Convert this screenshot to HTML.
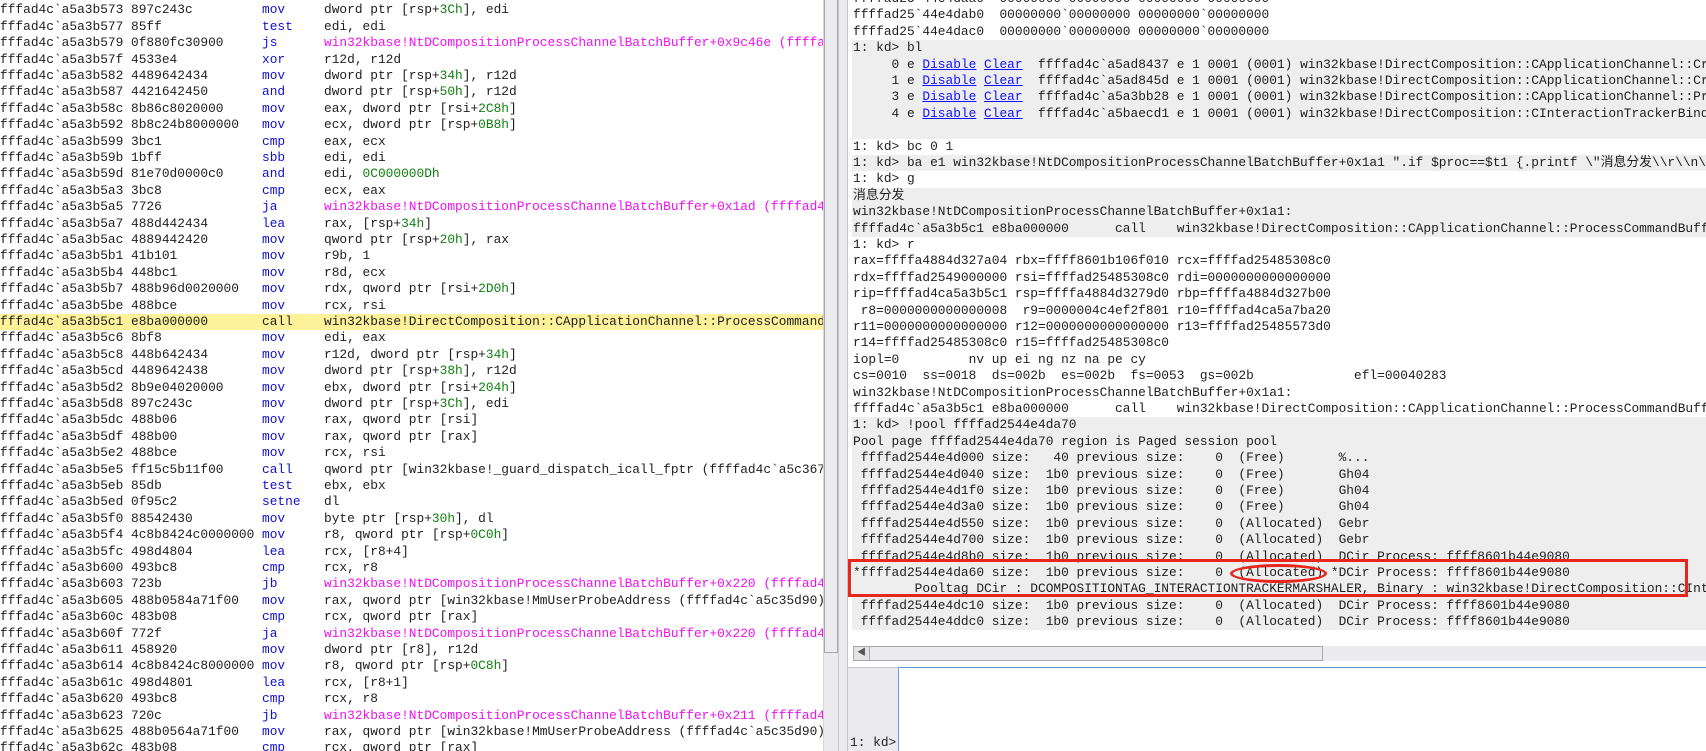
<!DOCTYPE html>
<html><head><meta charset="utf-8"><style>
*{margin:0;padding:0;box-sizing:border-box}
html,body{width:1706px;height:751px;overflow:hidden;background:#fff}
body{position:relative;font-family:"Liberation Mono","Noto Sans CJK SC",monospace;font-size:12.85px;color:#1e1e1e}
.r{position:absolute;left:0;height:16.4px;line-height:16.4px;white-space:pre}
#left{position:absolute;left:0;top:0;width:823px;height:751px;overflow:hidden}
#left .r{width:823px}
.m{position:absolute;left:262px;color:#1010d0}
.o{position:absolute;left:324px}
.b{position:absolute;left:131px}
.a{position:absolute;left:0}
.p{color:#f010f0}
.g{color:#108010}
.hl{background:#fdf29a}
#vs{position:absolute;left:823px;top:0;width:15px;height:751px;background:#ebebef;border-left:1px solid #d8d8d8}
#vthumb{position:absolute;left:824px;top:0;width:14px;height:653px;background:#ececf0;border:1px solid #a8a8a8;border-top:none}
#div{position:absolute;left:838px;top:0;width:10px;height:751px;background:#ebebef;border-left:1px solid #c8c8c8;border-right:1px solid #c8c8c8}
#right{position:absolute;left:848px;top:0;width:858px;height:640px;overflow:hidden}
#right .r{left:5px;width:900px}
.gb{position:absolute;left:4px;width:860px;background:#eeeeee}
.lk{color:#1010ff;text-decoration:underline}
#hs{position:absolute;left:853px;top:646px;width:853px;height:15px;background:#ececf0}
#hthumb{position:absolute;left:853px;top:646px;width:470px;height:15px;border:1px solid #a8a8a8;background:#ececf0}
#harr{position:absolute;left:853px;top:646px;width:17px;height:15px;border:1px solid #a8a8a8;background:#e4e4e8;font-size:9px;line-height:13px;text-align:center;color:#555}
#inl{position:absolute;left:848px;top:667px;width:50px;height:84px;background:#ebebef;border-top:1px solid #c8c8c8}
#inp{position:absolute;left:898px;top:667px;width:808px;height:84px;background:#fff;border-left:1px solid #6a9ad6;border-top:1px solid #6a9ad6}
#redbox{position:absolute;left:848px;top:559px;width:840px;height:38px;border:3px solid #e8261c}
#ell{position:absolute;left:1230px;top:564px;width:97px;height:19px;border:3px solid #e8261c;border-radius:50%}
</style></head><body>
<div id="left">
<div class="r" style="top:2.4px"><span class="a">fffad4c`a5a3b573</span><span class="b">897c243c</span><span class="m">mov</span><span class="o">dword ptr [rsp+<span class="g">3Ch</span>], edi</span></div>
<div class="r" style="top:18.8px"><span class="a">fffad4c`a5a3b577</span><span class="b">85ff</span><span class="m">test</span><span class="o">edi, edi</span></div>
<div class="r" style="top:35.2px"><span class="a">fffad4c`a5a3b579</span><span class="b">0f880fc30900</span><span class="m">js</span><span class="o p">win32kbase!NtDCompositionProcessChannelBatchBuffer+0x9c46e (ffffad4c`a5ad79e8)</span></div>
<div class="r" style="top:51.6px"><span class="a">fffad4c`a5a3b57f</span><span class="b">4533e4</span><span class="m">xor</span><span class="o">r12d, r12d</span></div>
<div class="r" style="top:68px"><span class="a">fffad4c`a5a3b582</span><span class="b">4489642434</span><span class="m">mov</span><span class="o">dword ptr [rsp+<span class="g">34h</span>], r12d</span></div>
<div class="r" style="top:84.4px"><span class="a">fffad4c`a5a3b587</span><span class="b">4421642450</span><span class="m">and</span><span class="o">dword ptr [rsp+<span class="g">50h</span>], r12d</span></div>
<div class="r" style="top:100.8px"><span class="a">fffad4c`a5a3b58c</span><span class="b">8b86c8020000</span><span class="m">mov</span><span class="o">eax, dword ptr [rsi+<span class="g">2C8h</span>]</span></div>
<div class="r" style="top:117.2px"><span class="a">fffad4c`a5a3b592</span><span class="b">8b8c24b8000000</span><span class="m">mov</span><span class="o">ecx, dword ptr [rsp+<span class="g">0B8h</span>]</span></div>
<div class="r" style="top:133.6px"><span class="a">fffad4c`a5a3b599</span><span class="b">3bc1</span><span class="m">cmp</span><span class="o">eax, ecx</span></div>
<div class="r" style="top:150px"><span class="a">fffad4c`a5a3b59b</span><span class="b">1bff</span><span class="m">sbb</span><span class="o">edi, edi</span></div>
<div class="r" style="top:166.4px"><span class="a">fffad4c`a5a3b59d</span><span class="b">81e70d0000c0</span><span class="m">and</span><span class="o">edi, <span class="g">0C000000Dh</span></span></div>
<div class="r" style="top:182.8px"><span class="a">fffad4c`a5a3b5a3</span><span class="b">3bc8</span><span class="m">cmp</span><span class="o">ecx, eax</span></div>
<div class="r" style="top:199.2px"><span class="a">fffad4c`a5a3b5a5</span><span class="b">7726</span><span class="m">ja</span><span class="o p">win32kbase!NtDCompositionProcessChannelBatchBuffer+0x1ad (ffffad4c`a5a3b5cd)</span></div>
<div class="r" style="top:215.6px"><span class="a">fffad4c`a5a3b5a7</span><span class="b">488d442434</span><span class="m">lea</span><span class="o">rax, [rsp+<span class="g">34h</span>]</span></div>
<div class="r" style="top:232px"><span class="a">fffad4c`a5a3b5ac</span><span class="b">4889442420</span><span class="m">mov</span><span class="o">qword ptr [rsp+<span class="g">20h</span>], rax</span></div>
<div class="r" style="top:248.4px"><span class="a">fffad4c`a5a3b5b1</span><span class="b">41b101</span><span class="m">mov</span><span class="o">r9b, 1</span></div>
<div class="r" style="top:264.8px"><span class="a">fffad4c`a5a3b5b4</span><span class="b">448bc1</span><span class="m">mov</span><span class="o">r8d, ecx</span></div>
<div class="r" style="top:281.2px"><span class="a">fffad4c`a5a3b5b7</span><span class="b">488b96d0020000</span><span class="m">mov</span><span class="o">rdx, qword ptr [rsi+<span class="g">2D0h</span>]</span></div>
<div class="r" style="top:297.6px"><span class="a">fffad4c`a5a3b5be</span><span class="b">488bce</span><span class="m">mov</span><span class="o">rcx, rsi</span></div>
<div class="r hl" style="top:314px"><span class="a">fffad4c`a5a3b5c1</span><span class="b">e8ba000000</span><span class="m" style="color:#1e1e1e">call</span><span class="o">win32kbase!DirectComposition::CApplicationChannel::ProcessCommandBufferIterator</span></div>
<div class="r" style="top:330.4px"><span class="a">fffad4c`a5a3b5c6</span><span class="b">8bf8</span><span class="m">mov</span><span class="o">edi, eax</span></div>
<div class="r" style="top:346.8px"><span class="a">fffad4c`a5a3b5c8</span><span class="b">448b642434</span><span class="m">mov</span><span class="o">r12d, dword ptr [rsp+<span class="g">34h</span>]</span></div>
<div class="r" style="top:363.2px"><span class="a">fffad4c`a5a3b5cd</span><span class="b">4489642438</span><span class="m">mov</span><span class="o">dword ptr [rsp+<span class="g">38h</span>], r12d</span></div>
<div class="r" style="top:379.6px"><span class="a">fffad4c`a5a3b5d2</span><span class="b">8b9e04020000</span><span class="m">mov</span><span class="o">ebx, dword ptr [rsi+<span class="g">204h</span>]</span></div>
<div class="r" style="top:396px"><span class="a">fffad4c`a5a3b5d8</span><span class="b">897c243c</span><span class="m">mov</span><span class="o">dword ptr [rsp+<span class="g">3Ch</span>], edi</span></div>
<div class="r" style="top:412.4px"><span class="a">fffad4c`a5a3b5dc</span><span class="b">488b06</span><span class="m">mov</span><span class="o">rax, qword ptr [rsi]</span></div>
<div class="r" style="top:428.8px"><span class="a">fffad4c`a5a3b5df</span><span class="b">488b00</span><span class="m">mov</span><span class="o">rax, qword ptr [rax]</span></div>
<div class="r" style="top:445.2px"><span class="a">fffad4c`a5a3b5e2</span><span class="b">488bce</span><span class="m">mov</span><span class="o">rcx, rsi</span></div>
<div class="r" style="top:461.6px"><span class="a">fffad4c`a5a3b5e5</span><span class="b">ff15c5b11f00</span><span class="m">call</span><span class="o">qword ptr [win32kbase!_guard_dispatch_icall_fptr (ffffad4c`a5c367b0)]</span></div>
<div class="r" style="top:478px"><span class="a">fffad4c`a5a3b5eb</span><span class="b">85db</span><span class="m">test</span><span class="o">ebx, ebx</span></div>
<div class="r" style="top:494.4px"><span class="a">fffad4c`a5a3b5ed</span><span class="b">0f95c2</span><span class="m">setne</span><span class="o">dl</span></div>
<div class="r" style="top:510.8px"><span class="a">fffad4c`a5a3b5f0</span><span class="b">88542430</span><span class="m">mov</span><span class="o">byte ptr [rsp+<span class="g">30h</span>], dl</span></div>
<div class="r" style="top:527.2px"><span class="a">fffad4c`a5a3b5f4</span><span class="b">4c8b8424c0000000</span><span class="m">mov</span><span class="o">r8, qword ptr [rsp+<span class="g">0C0h</span>]</span></div>
<div class="r" style="top:543.6px"><span class="a">fffad4c`a5a3b5fc</span><span class="b">498d4804</span><span class="m">lea</span><span class="o">rcx, [r8+4]</span></div>
<div class="r" style="top:560px"><span class="a">fffad4c`a5a3b600</span><span class="b">493bc8</span><span class="m">cmp</span><span class="o">rcx, r8</span></div>
<div class="r" style="top:576.4px"><span class="a">fffad4c`a5a3b603</span><span class="b">723b</span><span class="m">jb</span><span class="o p">win32kbase!NtDCompositionProcessChannelBatchBuffer+0x220 (ffffad4c`a5a3b640)</span></div>
<div class="r" style="top:592.8px"><span class="a">fffad4c`a5a3b605</span><span class="b">488b0584a71f00</span><span class="m">mov</span><span class="o">rax, qword ptr [win32kbase!MmUserProbeAddress (ffffad4c`a5c35d90)]</span></div>
<div class="r" style="top:609.2px"><span class="a">fffad4c`a5a3b60c</span><span class="b">483b08</span><span class="m">cmp</span><span class="o">rcx, qword ptr [rax]</span></div>
<div class="r" style="top:625.6px"><span class="a">fffad4c`a5a3b60f</span><span class="b">772f</span><span class="m">ja</span><span class="o p">win32kbase!NtDCompositionProcessChannelBatchBuffer+0x220 (ffffad4c`a5a3b640)</span></div>
<div class="r" style="top:642px"><span class="a">fffad4c`a5a3b611</span><span class="b">458920</span><span class="m">mov</span><span class="o">dword ptr [r8], r12d</span></div>
<div class="r" style="top:658.4px"><span class="a">fffad4c`a5a3b614</span><span class="b">4c8b8424c8000000</span><span class="m">mov</span><span class="o">r8, qword ptr [rsp+<span class="g">0C8h</span>]</span></div>
<div class="r" style="top:674.8px"><span class="a">fffad4c`a5a3b61c</span><span class="b">498d4801</span><span class="m">lea</span><span class="o">rcx, [r8+1]</span></div>
<div class="r" style="top:691.2px"><span class="a">fffad4c`a5a3b620</span><span class="b">493bc8</span><span class="m">cmp</span><span class="o">rcx, r8</span></div>
<div class="r" style="top:707.6px"><span class="a">fffad4c`a5a3b623</span><span class="b">720c</span><span class="m">jb</span><span class="o p">win32kbase!NtDCompositionProcessChannelBatchBuffer+0x211 (ffffad4c`a5a3b631)</span></div>
<div class="r" style="top:724px"><span class="a">fffad4c`a5a3b625</span><span class="b">488b0564a71f00</span><span class="m">mov</span><span class="o">rax, qword ptr [win32kbase!MmUserProbeAddress (ffffad4c`a5c35d90)]</span></div>
<div class="r" style="top:740.4px"><span class="a">fffad4c`a5a3b62c</span><span class="b">483b08</span><span class="m">cmp</span><span class="o">rcx, qword ptr [rax]</span></div>
</div>
<div id="vs"></div><div id="vthumb"></div>
<div id="div"></div>

<div id="right">
<div class="gb" style="top:40.2px;height:98.4px"></div>
<div class="gb" style="top:155px;height:16.4px"></div>
<div class="gb" style="top:187.8px;height:49.2px"></div>
<div class="gb" style="top:417.4px;height:213px"></div>
<div class="r" style="top:-9px">ffffad25`44e4daa0  00000000`00000000 00000000`00000000</div>
<div class="r" style="top:7.4px">ffffad25`44e4dab0  00000000`00000000 00000000`00000000</div>
<div class="r" style="top:23.8px">ffffad25`44e4dac0  00000000`00000000 00000000`00000000</div>
<div class="r" style="top:40.2px">1: kd&gt; bl</div>
<div class="r" style="top:56.6px">     0 e <span class="lk">Disable</span> <span class="lk">Clear</span>  ffffad4c`a5ad8437 e 1 0001 (0001) win32kbase!DirectComposition::CApplicationChannel::CreateResource</div>
<div class="r" style="top:73px">     1 e <span class="lk">Disable</span> <span class="lk">Clear</span>  ffffad4c`a5ad845d e 1 0001 (0001) win32kbase!DirectComposition::CApplicationChannel::CreateResource</div>
<div class="r" style="top:89.4px">     3 e <span class="lk">Disable</span> <span class="lk">Clear</span>  ffffad4c`a5a3bb28 e 1 0001 (0001) win32kbase!DirectComposition::CApplicationChannel::ProcessCommand</div>
<div class="r" style="top:105.8px">     4 e <span class="lk">Disable</span> <span class="lk">Clear</span>  ffffad4c`a5baecd1 e 1 0001 (0001) win32kbase!DirectComposition::CInteractionTrackerBindingManager</div>
<div class="r" style="top:138.6px">1: kd&gt; bc 0 1</div>
<div class="r" style="top:155px">1: kd&gt; ba e1 win32kbase!NtDCompositionProcessChannelBatchBuffer+0x1a1 ".if $proc==$t1 {.printf \"消息分发\\r\\n\";}"</div>
<div class="r" style="top:171.4px">1: kd&gt; g</div>
<div class="r" style="top:187.8px">消息分发</div>
<div class="r" style="top:204.2px">win32kbase!NtDCompositionProcessChannelBatchBuffer+0x1a1:</div>
<div class="r" style="top:220.6px">ffffad4c`a5a3b5c1 e8ba000000      call    win32kbase!DirectComposition::CApplicationChannel::ProcessCommandBufferIterator</div>
<div class="r" style="top:237px">1: kd&gt; r</div>
<div class="r" style="top:253.4px">rax=ffffa4884d327a04 rbx=ffff8601b106f010 rcx=ffffad25485308c0</div>
<div class="r" style="top:269.8px">rdx=ffffad2549000000 rsi=ffffad25485308c0 rdi=0000000000000000</div>
<div class="r" style="top:286.2px">rip=ffffad4ca5a3b5c1 rsp=ffffa4884d3279d0 rbp=ffffa4884d327b00</div>
<div class="r" style="top:302.6px"> r8=0000000000000008  r9=0000004c4ef2f801 r10=ffffad4ca5a7ba20</div>
<div class="r" style="top:319px">r11=0000000000000000 r12=0000000000000000 r13=ffffad25485573d0</div>
<div class="r" style="top:335.4px">r14=ffffad25485308c0 r15=ffffad25485308c0</div>
<div class="r" style="top:351.8px">iopl=0         nv up ei ng nz na pe cy</div>
<div class="r" style="top:368.2px">cs=0010  ss=0018  ds=002b  es=002b  fs=0053  gs=002b             efl=00040283</div>
<div class="r" style="top:384.6px">win32kbase!NtDCompositionProcessChannelBatchBuffer+0x1a1:</div>
<div class="r" style="top:401px">ffffad4c`a5a3b5c1 e8ba000000      call    win32kbase!DirectComposition::CApplicationChannel::ProcessCommandBufferIterator</div>
<div class="r" style="top:417.4px">1: kd&gt; !pool ffffad2544e4da70</div>
<div class="r" style="top:433.8px">Pool page ffffad2544e4da70 region is Paged session pool</div>
<div class="r" style="top:450.2px"> ffffad2544e4d000 size:   40 previous size:    0  (Free)       %...</div>
<div class="r" style="top:466.6px"> ffffad2544e4d040 size:  1b0 previous size:    0  (Free)       Gh04</div>
<div class="r" style="top:483px"> ffffad2544e4d1f0 size:  1b0 previous size:    0  (Free)       Gh04</div>
<div class="r" style="top:499.4px"> ffffad2544e4d3a0 size:  1b0 previous size:    0  (Free)       Gh04</div>
<div class="r" style="top:515.8px"> ffffad2544e4d550 size:  1b0 previous size:    0  (Allocated)  Gebr</div>
<div class="r" style="top:532.2px"> ffffad2544e4d700 size:  1b0 previous size:    0  (Allocated)  Gebr</div>
<div class="r" style="top:548.6px"> ffffad2544e4d8b0 size:  1b0 previous size:    0  (Allocated)  DCir Process: ffff8601b44e9080</div>
<div class="r" style="top:565px">*ffffad2544e4da60 size:  1b0 previous size:    0  (Allocated) *DCir Process: ffff8601b44e9080</div>
<div class="r" style="top:581.4px">        Pooltag DCir : DCOMPOSITIONTAG_INTERACTIONTRACKERMARSHALER, Binary : win32kbase!DirectComposition::CInteractionTrackerMarshaler</div>
<div class="r" style="top:597.8px"> ffffad2544e4dc10 size:  1b0 previous size:    0  (Allocated)  DCir Process: ffff8601b44e9080</div>
<div class="r" style="top:614.2px"> ffffad2544e4ddc0 size:  1b0 previous size:    0  (Allocated)  DCir Process: ffff8601b44e9080</div>
</div>
<div id="redbox"></div><div id="ell"></div>
<div id="hs"></div><div id="hthumb"></div><div id="harr">◀</div>
<div id="inl"></div><div id="inp"></div>
<div class="r" style="top:735px;left:850px">1: kd&gt;</div>
</body></html>
